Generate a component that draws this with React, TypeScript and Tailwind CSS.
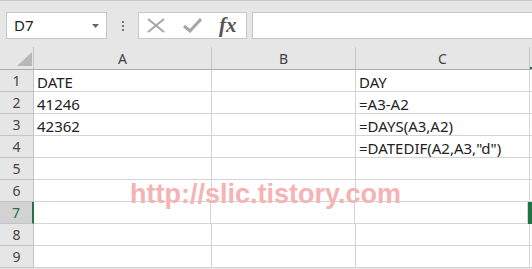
import React from "react";

const rows: [string, string, string][] = [
  ["DATE", "", "DAY"],
  ["41246", "", "=A3-A2"],
  ["42362", "", "=DAYS(A3,A2)"],
  ["", "", '=DATEDIF(A2,A3,"d")'],
  ["", "", ""],
  ["", "", ""],
  ["", "", ""],
  ["", "", ""],
  ["", "", ""],
];

const FormulaBar = () => (
  <div className="flex h-[47px] items-start pt-[11px] border-t border-[#c8c8c8]">
    <div className="ml-[6px] flex h-[27px] w-[101px] items-center justify-between border border-[#c6c6c6] bg-white pl-[7px] pr-[7px] text-[15px] text-[#222]">
      <span>D7</span>
      <svg width="7" height="4" viewBox="0 0 7 4">
        <path d="M0 0h7L3.5 4z" fill="#666" />
      </svg>
    </div>
    <div className="flex h-[27px] w-[31px] flex-col items-center justify-center gap-[2px]">
      <span className="h-[2px] w-[2px] bg-[#777]" />
      <span className="h-[2px] w-[2px] bg-[#777]" />
      <span className="h-[2px] w-[2px] bg-[#777]" />
    </div>
    <div className="flex h-[27px] w-[109px] items-center border border-[#c6c6c6] bg-white">
      <svg className="ml-[8px]" width="18" height="15" viewBox="0 0 18 15">
        <path d="M1 1l16 13M17 1L1 14" stroke="#a6a6a6" strokeWidth="2" fill="none" />
      </svg>
      <svg className="ml-[18px]" width="19" height="15" viewBox="0 0 19 15">
        <path d="M1 8l6 5L18 1" stroke="#a6a6a6" strokeWidth="3" fill="none" />
      </svg>
      <span className="ml-[17px] font-['Liberation_Serif',serif] text-[21px] font-bold italic leading-none text-[#555]">
        fx
      </span>
    </div>
    <div className="ml-[5px] h-[27px] flex-1 border-y border-l border-[#c6c6c6] bg-white" />
  </div>
);

export default function App() {
  return (
    <div className="relative h-[269px] w-[532px] overflow-hidden bg-[#e6e6e6] font-['Noto_Sans',sans-serif]">
      <FormulaBar />
      {/* column headers */}
      <div className="flex h-[23px] border-b border-[#ababab] text-[14px] text-[#444]">
        <div className="relative w-[34px] border-r border-[#c4c4c4]">
          <svg className="absolute left-[17px] top-[5px]" width="15" height="14" viewBox="0 0 15 14">
            <path d="M15 0v14H0z" fill="#b8b8b8" />
          </svg>
        </div>
        <div className="flex w-[178px] items-center justify-center border-r border-[#c4c4c4]">A</div>
        <div className="flex w-[144px] items-center justify-center border-r border-[#c4c4c4]">B</div>
        <div className="flex w-[174px] items-center justify-center border-r border-[#c4c4c4]">C</div>
        <div className="flex-1 border-b-2 border-[#217346]" />
      </div>
      {rows.map((r, i) => {
        const sel = i === 6;
        return (
          <div key={i} className="flex h-[22px] text-[15px] leading-[22px] text-[#222]">
            <div
              className={
                sel
                  ? "w-[34px] border-b border-r-2 border-b-[#c4c4c4] border-r-[#217346] bg-[#d2d2d2] text-center text-[14px] text-[#217346]"
                  : "w-[34px] border-b border-r border-[#c4c4c4] bg-[#e6e6e6] text-center text-[14px] text-[#444]"
              }
            >
              {i + 1}
            </div>
            <div className="w-[178px] border-b border-r border-[#d4d4d4] bg-white pl-[3px] pt-[1px]">{r[0]}</div>
            <div className="w-[144px] border-b border-r border-[#d4d4d4] bg-white pl-[3px] pt-[1px]">{r[1]}</div>
            <div className="w-[174px] border-b border-r border-[#d4d4d4] bg-white pl-[3px] pt-[1px]">{r[2]}</div>
            <div
              className={
                sel
                  ? "flex-1 border-2 border-[#217346] bg-white"
                  : "flex-1 border-b border-[#d4d4d4] bg-white"
              }
            />
          </div>
        );
      })}
      <div className="absolute left-[130px] top-[181px] font-['Liberation_Sans',sans-serif] text-[27px] font-bold leading-none text-[#f5b3b3]">
        http://slic.tistory.com
      </div>
    </div>
  );
}
